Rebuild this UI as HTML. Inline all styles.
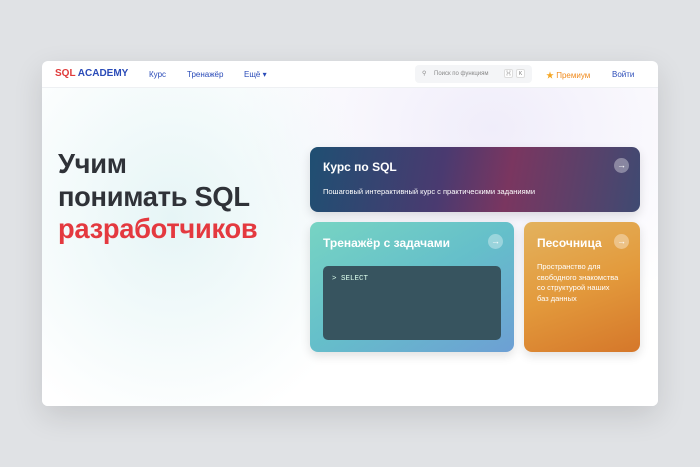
<!DOCTYPE html>
<html><head><meta charset="utf-8"><style>
*{margin:0;padding:0;box-sizing:border-box}
body{width:700px;height:467px;background:#e0e2e5;font-family:"Liberation Sans","Noto Sans CJK SC",sans-serif;position:relative;overflow:hidden}
.win{position:absolute;left:42px;top:61px;width:616px;height:345px;background:#fff;border-radius:6px;overflow:hidden;box-shadow:0 10px 30px rgba(0,0,0,.12)}
.hero{position:absolute;left:0;top:27px;width:616px;height:318px;background:radial-gradient(ellipse 200px 220px at 130px 130px,#e6f5f6 0%,rgba(255,255,255,0) 100%),radial-gradient(ellipse 260px 200px at 450px 40px,#f0edfa 0%,rgba(255,255,255,0) 100%),#fff}
.nav{position:absolute;left:0;top:0;width:616px;height:27px;border-bottom:1px solid #eef0f3;font-size:8px;color:#2a4bb8}
.nav span{position:absolute;top:9px}
.logo{font-weight:bold;font-size:10px;left:13px;top:7px!important}
.search{position:absolute;left:373px;top:4px;width:117px;height:18px;background:#f4f5f7;border-radius:4px;font-size:6px;color:#888}
.k{position:absolute;top:4px;width:9px;height:9px;border:1px solid #ddd;background:#fff;border-radius:2px;font-size:5px;text-align:center;line-height:8px;color:#777}
h1{position:absolute;left:16px;top:87px;font-size:27.3px;line-height:32.5px;color:#2f3238;font-weight:bold;letter-spacing:-0.3px}
.card{position:absolute;border-radius:8px;color:#fff;box-shadow:0 4px 10px rgba(0,0,0,.12)}
.t{position:absolute;font-weight:bold;font-size:12px}
.arr{position:absolute;width:15px;height:15px;border-radius:50%;background:rgba(255,255,255,.35);font-size:9px;text-align:center;line-height:14px}
</style></head><body>
<div class="win">
<div class="hero"></div>
<div class="nav">
<span class="logo"><span style="position:static;color:#e03a3a">SQL</span> ACADEMY</span>
<span style="left:107px">Курс</span>
<span style="left:145px">Тренажёр</span>
<span style="left:202px">Ещё ▾</span>
<div class="search"><span style="left:7px;top:5px;position:absolute">⚲</span><span style="left:19px;top:6px;position:absolute">Поиск по функциям</span><div class="k" style="left:89px">⌘</div><div class="k" style="left:101px">K</div></div>
<span style="left:504px;color:#f08a1c"><b style="color:#f5a623">★</b> Премиум</span>
<span style="left:570px">Войти</span>
</div>
<h1>Учим<br>понимать SQL<br><span style="color:#e4393f">разработчиков</span></h1>
<div class="card" style="left:268px;top:86px;width:330px;height:65px;background:linear-gradient(100deg,#1f4f72 0%,#4a3a70 40%,#7a3660 60%,#3f4a72 100%)">
<div class="t" style="left:13px;top:13px">Курс по SQL</div>
<div class="arr" style="left:304px;top:11px">→</div>
<div style="position:absolute;left:13px;top:40px;font-size:7.5px">Пошаговый интерактивный курс с практическими заданиями</div>
</div>
<div class="card" style="left:268px;top:161px;width:204px;height:130px;background:linear-gradient(150deg,#77d4c3 0%,#65bfca 50%,#6d9fd4 100%)">
<div class="t" style="left:13px;top:14px">Тренажёр с задачами</div>
<div class="arr" style="left:178px;top:12px">→</div>
<div style="position:absolute;left:13px;top:44px;width:178px;height:74px;background:#37545f;border-radius:5px;font-family:'Liberation Mono',monospace;font-size:7.5px;padding:9px 9px;color:#dfe">&gt; SELECT</div>
</div>
<div class="card" style="left:482px;top:161px;width:116px;height:130px;background:linear-gradient(160deg,#e3b25e 0%,#e39a3c 50%,#d5772a 100%)">
<div class="t" style="left:13px;top:14px">Песочница</div>
<div class="arr" style="left:90px;top:12px">→</div>
<div style="position:absolute;left:13px;top:40px;font-size:7.5px;line-height:10.7px">Пространство для<br>свободного знакомства<br>со структурой наших<br>баз данных</div>
</div>
</div>
</body></html>
